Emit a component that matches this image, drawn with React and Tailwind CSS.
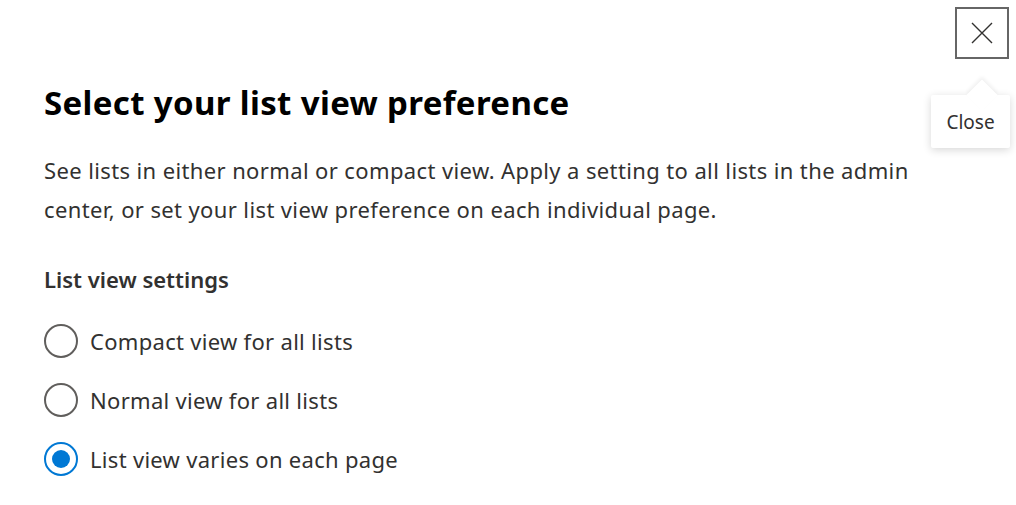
import React, { useState } from "react";

const options = [
  { id: "compact", label: "Compact view for all lists" },
  { id: "normal", label: "Normal view for all lists" },
  { id: "varies", label: "List view varies on each page" },
];

export default function App() {
  const [value, setValue] = useState("varies");

  return (
    <div className="relative w-[1016px] h-[505px] bg-white overflow-hidden text-[#323130]" style={{ fontFamily: '"Noto Sans", "Open Sans", sans-serif' }}>
      <div className="pl-[44px] pt-[83px]">
        <h1 className="text-[33px] leading-[40px] font-bold text-black tracking-[0.35px]">
          Select your list view preference
        </h1>
        <p className="mt-[28px] text-[22px] leading-[39px] w-[900px] tracking-[0.38px]">
          See lists in either normal or compact view. Apply a setting to all lists in the admin center, or set your list view preference on each individual page.
        </p>
        <h2 className="mt-[35px] text-[22px] leading-[30px] font-semibold">List view settings</h2>
        <div className="mt-[30px] flex flex-col gap-[25px]">
          {options.map((o) => {
            const checked = value === o.id;
            return (
              <label key={o.id} className="flex items-center gap-[12px] h-[34px] cursor-pointer" onClick={() => setValue(o.id)}>
                <span
                  className={
                    checked
                      ? "w-[34px] h-[34px] rounded-full border-2 border-[#0078d4] flex items-center justify-center"
                      : "w-[34px] h-[34px] rounded-full border-2 border-[#605e5c]"
                  }
                >
                  {checked && <span className="w-[18px] h-[18px] rounded-full bg-[#0078d4]" />}
                </span>
                <span className="text-[22px] leading-[30px] tracking-[0.3px]">{o.label}</span>
              </label>
            );
          })}
        </div>
      </div>

      <button className="absolute left-[955px] top-[7px] w-[54px] h-[52px] border-2 border-[#666] flex items-center justify-center bg-white">
        <svg width="24" height="24" viewBox="0 0 24 24" fill="none" stroke="#323130" strokeWidth="1.4">
          <path d="M2 2 L22 22 M22 2 L2 22" />
        </svg>
      </button>

      <div className="absolute left-[931px] top-[95px] w-[79px] h-[53px] bg-white rounded-[2px] shadow-[0_2px_8px_rgba(0,0,0,0.16)] flex items-center justify-center">
        <div className="absolute left-[40px] top-[-11px] w-[22px] h-[22px] bg-white rotate-45 shadow-[-2px_-2px_4px_rgba(0,0,0,0.06)]" />
        <span className="relative text-[19px] leading-[24px] text-[#323130]">Close</span>
      </div>
    </div>
  );
}
